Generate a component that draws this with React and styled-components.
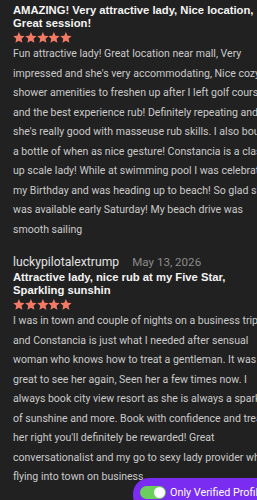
import React from "react";
import styled, { createGlobalStyle } from "styled-components";

const Global = createGlobalStyle`
  html, body {
    margin: 0;
    padding: 0;
    background: #212121;
    overflow: hidden;
  }
`;

const Page = styled.div`
  width: 290px;
  height: 500px;
  padding: 4px 0 0 13px;
  box-sizing: border-box;
  background: #212121;
  font-family: Roboto, "Noto Sans", sans-serif;
  overflow: hidden;
`;

const Review = styled.div`
  width: ${props => props.$wrap}px;
  margin-bottom: 16px;
`;

const Meta = styled.div`
  display: flex;
  align-items: baseline;
  gap: 13px;
  line-height: 15px;
  margin-bottom: 1px;
`;

const User = styled.span`
  color: #e0e0e0;
  font-size: 12.2px;
`;

const DateText = styled.span`
  color: #8a8a8a;
  font-size: 11.6px;
`;

const Title = styled.div`
  color: #f4f4f4;
  font-family: "Liberation Sans", Arial, sans-serif;
  font-weight: 700;
  font-size: 11.25px;
  line-height: 13px;
`;

const Stars = styled.div`
  display: flex;
  height: 11px;
  margin: 2px 0 1px;
`;

const Body = styled.p`
  margin: 0;
  color: #cacaca;
  font-size: 10.55px;
  line-height: 19.5px;
`;

const Pill = styled.div`
  position: fixed;
  left: 133px;
  top: 478px;
  display: flex;
  align-items: flex-start;
  gap: 4px;
  height: 34px;
  padding: 8px 12px 0 7px;
  border-radius: 16px;
  background: #7a2cf0;
  color: #fff;
  font-family: Roboto, sans-serif;
  font-size: 10.8px;
  line-height: 14px;
  white-space: nowrap;
  box-sizing: border-box;
`;

const Switch = styled.span`
  position: relative;
  flex: none;
  width: 26px;
  height: 13px;
  border-radius: 7px;
  background: #6bd05b;
  &::after {
    content: "";
    position: absolute;
    right: 1px;
    top: 1px;
    width: 11px;
    height: 11px;
    border-radius: 50%;
    background: #fff;
  }
`;

const Star = () => (
  <svg width="11.8" height="11" viewBox="0 0 24 23">
    <path
      fill="#f47a66"
      d="M12 0L15.4 7.8L23.9 8.6L17.5 14.3L19.3 22.6L12 18.3L4.7 22.6L6.5 14.3L0.1 8.6L8.6 7.8Z"
    />
  </svg>
);

const FiveStars = () => (
  <Stars>
    {[0, 1, 2, 3, 4].map(i => (
      <Star key={i} />
    ))}
  </Stars>
);

const reviews = [
  {
    wrap: 263,
    title: "AMAZING! Very attractive lady, Nice location, Great session!",
    body:
      "Fun attractive lady! Great location near mall, Very impressed and she's very accommodating, Nice cozy shower amenities to freshen up after I left golf course and the best experience rub! Definitely repeating and she's really good with masseuse rub skills. I also bought a bottle of when as nice gesture! Constancia is a class up scale lady! While at swimming pool I was celebrating my Birthday and was heading up to beach! So glad she was available early Saturday! My beach drive was smooth sailing"
  },
  {
    wrap: 258.5,
    user: "luckypilotalextrump",
    date: "May 13, 2026",
    title: "Attractive lady, nice rub at my Five Star, Sparkling sunshin",
    body:
      "I was in town and couple of nights on a business trip and Constancia is just what I needed after sensual woman who knows how to treat a gentleman. It was great to see her again, Seen her a few times now. I always book city view resort as she is always a spark of sunshine and more. Book with confidence and treat her right you'll definitely be rewarded! Great conversationalist and my go to sexy lady provider when flying into town on business"
  }
];

export default function App() {
  return (
    <>
      <Global />
      <Page>
        {reviews.map((r, i) => (
          <Review key={i} $wrap={r.wrap}>
            {r.user && (
              <Meta>
                <User>{r.user}</User>
                <DateText>{r.date}</DateText>
              </Meta>
            )}
            <Title>{r.title}</Title>
            <FiveStars />
            <Body>{r.body}</Body>
          </Review>
        ))}
      </Page>
      <Pill>
        <Switch />
        Only Verified Profiles
      </Pill>
    </>
  );
}
